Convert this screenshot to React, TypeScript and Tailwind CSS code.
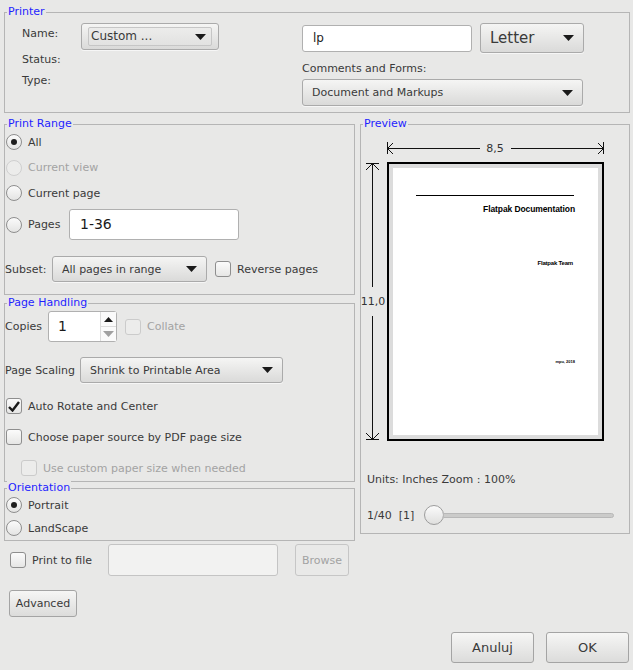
import React from "react";

const font = { fontFamily: '"DejaVu Sans", "Liberation Sans", sans-serif' };

function Arrow({ color = "#1a1a1a" }: { color?: string }) {
  return (
    <svg width="11" height="6" viewBox="0 0 11 6">
      <path d="M0 0 L11 0 L5.5 6 Z" fill={color} />
    </svg>
  );
}

function Combo({
  label,
  className,
  textClass = "text-[11px]",
  inner = false,
}: {
  label: string;
  className: string;
  textClass?: string;
  inner?: boolean;
}) {
  return (
    <div
      className={`flex items-center rounded-[3px] border border-[#aaaaaa] bg-gradient-to-b from-[#f5f5f4] to-[#dadad9] shadow-[0_1px_0_#f6f6f6] ${className}`}
    >
      {inner ? (
        <div className="mx-[6px] flex h-[19px] flex-1 items-center justify-between rounded-[2px] border border-[#c6c6c6] bg-gradient-to-b from-[#ececeb] to-[#e2e2e1] pl-[2px] pr-[5px]">
          <span className={textClass}>{label}</span>
          <Arrow />
        </div>
      ) : (
        <div className="flex flex-1 items-center justify-between pl-[9px] pr-[9px]">
          <span className={textClass}>{label}</span>
          <Arrow />
        </div>
      )}
    </div>
  );
}

function Radio({ checked = false, disabled = false }: { checked?: boolean; disabled?: boolean }) {
  return (
    <div
      className={`flex h-[16px] w-[16px] shrink-0 items-center justify-center rounded-full border ${
        disabled
          ? "border-[#cfcfcf] bg-[#ececeb]"
          : "border-[#8e8e8e] bg-gradient-to-b from-[#fbfbfb] to-[#e4e4e3]"
      }`}
    >
      {checked && <div className="h-[6px] w-[6px] rounded-full bg-[#1e1e1e]" />}
    </div>
  );
}

function Check({ checked = false, disabled = false }: { checked?: boolean; disabled?: boolean }) {
  return (
    <div
      className={`flex h-[16px] w-[16px] shrink-0 items-center justify-center rounded-[3px] border ${
        disabled
          ? "border-[#cbcbcb] bg-[#ececeb]"
          : "border-[#8e8e8e] bg-gradient-to-b from-[#fbfbfb] to-[#e6e6e5]"
      }`}
    >
      {checked && (
        <svg width="12" height="11" viewBox="0 0 12 11">
          <path d="M1 6 L4.5 9.5 L11 1" fill="none" stroke="#1a1a1a" strokeWidth="2.4" />
        </svg>
      )}
    </div>
  );
}

function Box({
  title,
  className,
  children,
}: {
  title: string;
  className: string;
  children?: React.ReactNode;
}) {
  return (
    <div className={`relative border border-[#b5b5b5] ${className}`}>
      <span className="absolute -top-[8px] left-[2px] bg-[#e8e8e7] px-px text-[11px] leading-[14px] text-[#1f1fff]">
        {title}
      </span>
      {children}
    </div>
  );
}

function Button({
  label,
  className,
  disabled = false,
  textClass = "text-[11px]",
}: {
  label: string;
  className: string;
  disabled?: boolean;
  textClass?: string;
}) {
  return (
    <div
      className={`flex items-center justify-center rounded-[3px] border ${
        disabled
          ? "border-[#c6c6c6] bg-[#e9e9e8] text-[#a2a2a2]"
          : "border-[#a4a4a4] bg-gradient-to-b from-[#f6f6f5] to-[#dcdcdb]"
      } ${textClass} ${className}`}
    >
      {label}
    </div>
  );
}

export default function App() {
  return (
    <div
      style={font}
      className="flex h-[670px] w-[633px] flex-col overflow-hidden bg-[#e8e8e7] text-[11px] leading-[13px] text-[#3a3a3a]"
    >
      {/* Printer */}
      <Box title="Printer" className="ml-[4px] mt-[12px] flex h-[101px] w-[626px]">
        <div className="flex w-[297px] flex-col pl-[17px] pt-[10px]">
          <div className="flex items-start">
            <span className="mt-[4px] w-[59px]">Name:</span>
            <Combo label="Custom ..." inner className="h-[27px] w-[138px]" textClass="text-[12px]" />
          </div>
          <span className="mt-[3px]">Status:</span>
          <span className="mt-[8px]">Type:</span>
        </div>
        <div className="flex flex-col pt-[10px]">
          <div className="flex items-center gap-[8px]">
            <div className="flex h-[27px] w-[170px] items-center rounded-[3px] border border-[#b0b0b0] bg-white pl-[10px] text-[12px] text-[#222]">
              lp
            </div>
            <Combo label="Letter" className="h-[30px] w-[104px]" textClass="text-[15px]" />
          </div>
          <span className="mt-[9px]">Comments and Forms:</span>
          <Combo label="Document and Markups" className="mt-[4px] h-[27px] w-[281px]" />
        </div>
      </Box>

      <div className="mt-[11px] flex">
        {/* left column */}
        <div className="ml-[4px] flex w-[351px] flex-col">
          <Box title="Print Range" className="flex h-[171px] flex-col">
            <div className="mt-[4px] flex h-[26px] items-center pl-[1px]">
              <Radio checked />
              <span className="ml-[6px]">All</span>
            </div>
            <div className="flex h-[25px] items-center pl-[1px] text-[#a3a3a3]">
              <Radio disabled />
              <span className="ml-[6px]">Current view</span>
            </div>
            <div className="flex h-[26px] items-center pl-[1px]">
              <Radio />
              <span className="ml-[6px]">Current page</span>
            </div>
            <div className="mt-[3px] flex h-[31px] items-center pl-[1px]">
              <Radio />
              <span className="ml-[6px] w-[41px]">Pages</span>
              <div className="flex h-[31px] w-[170px] items-center rounded-[3px] border border-[#b0b0b0] bg-white pl-[10px] text-[14px] text-[#1a1a1a]">
                1-36
              </div>
            </div>
            <div className="mt-[16px] flex h-[26px] items-center">
              <span className="w-[47px]">Subset:</span>
              <Combo label="All pages in range" className="h-[26px] w-[155px]" />
              <div className="ml-[8px]">
                <Check />
              </div>
              <span className="ml-[6px]">Reverse pages</span>
            </div>
          </Box>

          <Box title="Page Handling" className="mt-[8px] flex h-[179px] flex-col">
            <div className="mt-[7px] flex h-[31px] items-center">
              <span className="w-[43px]">Copies</span>
              <div className="flex h-[31px] w-[69px] rounded-[3px] border border-[#b0b0b0] bg-white">
                <span className="flex flex-1 items-center pl-[9px] text-[14px] text-[#1a1a1a]">1</span>
                <div className="flex w-[16px] flex-col border-l border-[#dcdcdc] bg-[#fafafa]">
                  <div className="flex flex-1 items-center justify-center border-b border-[#dcdcdc]">
                    <svg width="9" height="5" viewBox="0 0 9 5">
                      <path d="M0 5 L9 5 L4.5 0 Z" fill="#1a1a1a" />
                    </svg>
                  </div>
                  <div className="flex flex-1 items-center justify-center">
                    <Arrow color="#a0a0a0" />
                  </div>
                </div>
              </div>
              <div className="ml-[8px]">
                <Check disabled />
              </div>
              <span className="ml-[6px] text-[#a3a3a3]">Collate</span>
            </div>
            <div className="mt-[15px] flex h-[26px] items-center">
              <span className="w-[75px]">Page Scaling</span>
              <Combo label="Shrink to Printable Area" className="h-[26px] w-[203px]" />
            </div>
            <div className="mt-[12px] flex h-[22px] items-center pl-[1px]">
              <Check checked />
              <span className="ml-[6px]">Auto Rotate and Center</span>
            </div>
            <div className="mt-[9px] flex h-[22px] items-center pl-[1px]">
              <Check />
              <span className="ml-[6px]">Choose paper source by PDF page size</span>
            </div>
            <div className="mt-[9px] flex h-[22px] items-center pl-[16px] text-[#a3a3a3]">
              <Check disabled />
              <span className="ml-[6px]">Use custom paper size when needed</span>
            </div>
          </Box>

          <Box title="Orientation" className="mt-[6px] flex h-[53px] flex-col">
            <div className="mt-[5px] flex h-[22px] items-center pl-[1px]">
              <Radio checked />
              <span className="ml-[6px]">Portrait</span>
            </div>
            <div className="mt-px flex h-[22px] items-center pl-[1px]">
              <Radio />
              <span className="ml-[6px]">LandScape</span>
            </div>
          </Box>

          <div className="mt-[3px] flex h-[32px] items-center pl-[6px]">
            <Check />
            <span className="ml-[6px] w-[76px]">Print to file</span>
            <div className="h-[32px] w-[170px] rounded-[3px] border border-[#c4c4c4] bg-[#f2f2f1]" />
            <Button label="Browse" disabled className="ml-[17px] h-[32px] w-[54px]" />
          </div>
          <Button label="Advanced" className="ml-[5px] mt-[14px] h-[27px] w-[68px]" textClass="text-[11px]" />
        </div>

        {/* Preview */}
        <Box title="Preview" className="ml-[5px] flex h-[410px] w-[270px] flex-col">
          <svg className="ml-[26px] mt-[17px]" width="217" height="12" viewBox="0 0 217 12">
            <g stroke="#111" strokeWidth="1" fill="none">
              <line x1="0.5" y1="0" x2="0.5" y2="12" />
              <line x1="216.5" y1="0" x2="216.5" y2="12" />
              <line x1="0" y1="6.5" x2="93" y2="6.5" />
              <line x1="124" y1="6.5" x2="217" y2="6.5" />
              <path d="M6 1 L0.5 6.5 L6 12" />
              <path d="M211 1 L216.5 6.5 L211 12" />
            </g>
            <text x="108" y="10" textAnchor="middle" fontSize="11" fill="#333" fontFamily="DejaVu Sans">
              8,5
            </text>
          </svg>
          <div className="mt-[8px] flex">
            <svg width="26" height="279" viewBox="0 0 26 279">
              <g stroke="#111" strokeWidth="1" fill="none">
                <line x1="5" y1="1.5" x2="18" y2="1.5" />
                <line x1="5" y1="277.5" x2="18" y2="277.5" />
                <line x1="11.5" y1="1" x2="11.5" y2="125" />
                <line x1="11.5" y1="154" x2="11.5" y2="278" />
                <path d="M5 8 L11.5 1.5 L18 8" />
                <path d="M5 271 L11.5 277.5 L18 271" />
              </g>
              <text x="12" y="143" textAnchor="middle" fontSize="11" fill="#333" fontFamily="DejaVu Sans">
                11,0
              </text>
            </svg>
            <div className="h-[279px] w-[217px] border-2 border-black bg-[#dcdcdc] p-[4px]">
              <div
                className="flex h-full flex-col bg-white px-[23px] pt-[27px] text-black"
                style={{ fontFamily: '"Liberation Sans", Arial, sans-serif' }}
              >
                <div className="h-px w-[158px] bg-black" />
                <div className="mt-[7px] text-right text-[8.5px] font-bold leading-[12px] tracking-[-0.1px]">
                  Flatpak Documentation
                </div>
                <div className="mt-[44px] pr-[2px] text-right text-[6px] font-bold leading-[8px] tracking-[-0.2px]">
                  Flatpak Team
                </div>
                <div className="mt-[92px] text-right text-[4px] font-bold leading-[6px]">mpu, 2018</div>
              </div>
            </div>
          </div>
          <span className="ml-[6px] mt-[32px]">Units: Inches Zoom : 100%</span>
          <div className="ml-[6px] mt-[19px] flex h-[20px] items-center">
            <span className="w-[57px] whitespace-pre">1/40  [1]</span>
            <div className="h-[20px] w-[20px] rounded-full border border-[#9c9c9c] bg-gradient-to-b from-[#fbfbfb] to-[#dfdfde]" />
            <div className="-ml-[1px] h-[5px] w-[171px] rounded-r-[3px] border border-[#b8b8b8] bg-[#cbcbca]" />
          </div>
        </Box>
      </div>

      <div className="mt-[15px] flex justify-end gap-[12px] pr-[4px]">
        <Button label="Anuluj" className="h-[31px] w-[83px]" textClass="text-[13px]" />
        <Button label="OK" className="h-[31px] w-[83px]" textClass="text-[13px]" />
      </div>
    </div>
  );
}
